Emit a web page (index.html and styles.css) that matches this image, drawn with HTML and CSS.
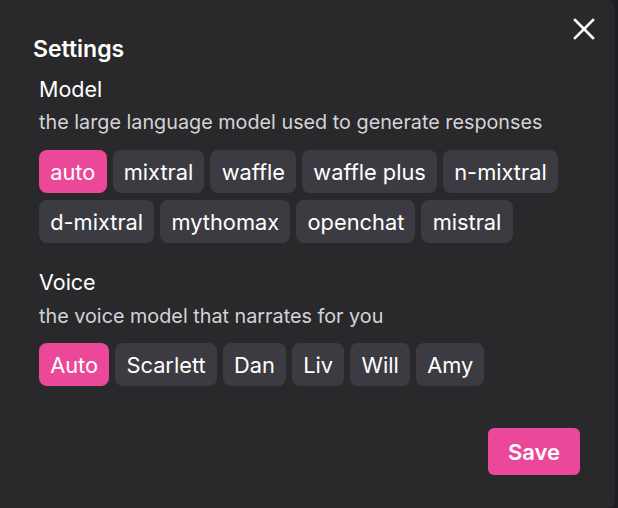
FILE: index.html
```html
<!DOCTYPE html>
<html>
<head>
<meta charset="utf-8">
<link rel="stylesheet" href="styles.css">
</head>
<body>
<div class="dialog">
  <button class="close" aria-label="Close">
    <svg width="22" height="22" viewBox="0 0 22 22"><path d="M2 2L20 20M20 2L2 20" stroke="#fff" stroke-width="2.6" stroke-linecap="square" fill="none"/></svg>
  </button>
  <h2 class="title">Settings</h2>
  <div class="content">
    <section class="group">
      <div class="label">Model</div>
      <div class="desc">the large language model used to generate responses</div>
      <div class="chips">
        <span class="chip active">auto</span>
        <span class="chip">mixtral</span>
        <span class="chip">waffle</span>
        <span class="chip">waffle plus</span>
        <span class="chip">n-mixtral</span>
        <span class="chip">d-mixtral</span>
        <span class="chip">mythomax</span>
        <span class="chip">openchat</span>
        <span class="chip">mistral</span>
      </div>
    </section>
    <section class="group voice">
      <div class="label">Voice</div>
      <div class="desc">the voice model that narrates for you</div>
      <div class="chips">
        <span class="chip active">Auto</span>
        <span class="chip">Scarlett</span>
        <span class="chip">Dan</span>
        <span class="chip">Liv</span>
        <span class="chip">Will</span>
        <span class="chip">Amy</span>
      </div>
    </section>
  </div>
  <div class="footer">
    <button class="save">Save</button>
  </div>
</div>
</body>
</html>
```
FILE: styles.css
```css
html, body {
  margin: 0;
  padding: 0;
  background: #1f1d22;
  font-family: Inter, "Noto Sans", sans-serif;
}
.dialog {
  position: relative;
  width: 615px;
  height: 508px;
  box-sizing: border-box;
  background: #29292b;
  border-radius: 0 8px 8px 0;
  padding: 35px 0 0 33px;
  color: #fff;
}
.close {
  position: absolute;
  top: 18px;
  right: 20px;
  background: none;
  border: 0;
  padding: 0;
  width: 22px;
  height: 22px;
  cursor: pointer;
}
.close svg { display: block; }
.title {
  margin: 0;
  font-size: 23px;
  line-height: 28px;
  font-weight: 600;
}
.content {
  padding-left: 6px;
  padding-right: 40px;
  display: flex;
  flex-direction: column;
}
.group { display: flex; flex-direction: column; }
.label {
  margin-top: 12px;
  font-size: 21.5px;
  line-height: 28px;
}
.voice .label { margin-top: 24.5px; }
.desc {
  font-size: 19.8px;
  line-height: 28px;
  color: #d4d4d8;
  margin-top: 5px;
}
.voice .desc { margin-top: 6px; }
.chips {
  display: flex;
  flex-wrap: wrap;
  gap: 7px 6px;
  margin-top: 14px;
}
.voice .chips { margin-top: 13.5px; }
.chip {
  background: #3b3b41;
  border-radius: 8px;
  padding: 8px 11.2px 7px;
  font-size: 21.8px;
  line-height: 28px;
  color: #fff;
}
.chip.active { background: #ec4899; }
.footer {
  display: flex;
  justify-content: flex-end;
  padding-right: 35px;
  margin-top: 42px;
}
.save {
  background: #ec4899;
  color: #fff;
  border: 0;
  border-radius: 6px;
  font-family: inherit;
  font-size: 22px;
  font-weight: 600;
  line-height: 28px;
  padding: 10px 20px 9px;
}
```
